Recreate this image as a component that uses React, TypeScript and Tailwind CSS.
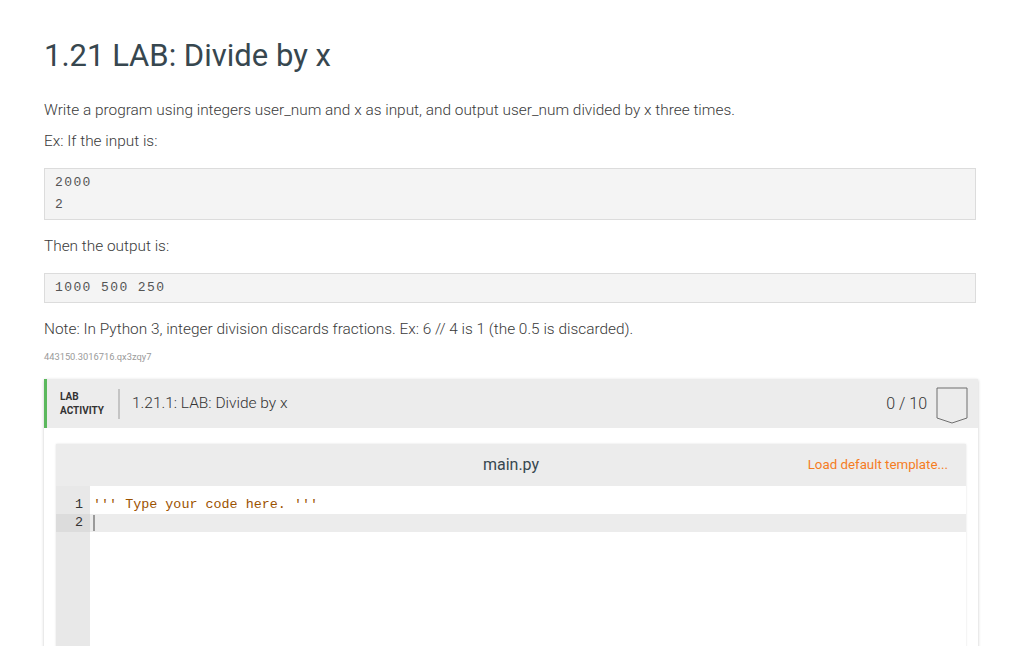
import React from "react";

export default function App() {
  const mono = { fontFamily: '"Liberation Mono", "DejaVu Sans Mono", monospace' };
  return (
    <div className="min-h-[646px] bg-white" style={{ fontFamily: 'Roboto, "Noto Sans", sans-serif' }}>
      <div className="ml-[44px] w-[932px] pt-9">
        <h1 className="text-[31px] leading-[40px] text-[#37474f] font-normal">1.21 LAB: Divide by x</h1>
        <p className="mt-[24px] text-[15.4px] leading-[20px] text-[#3a3a3a] font-light">
          Write a program using integers user_num and x as input, and output user_num divided by x three times.
        </p>
        <p className="mt-[11px] text-[15.4px] leading-[20px] text-[#3a3a3a] font-light">Ex: If the input is:</p>
        <div
          className="mt-[17px] border border-[#dcdcdc] bg-[#f4f4f4] px-[10px] py-[3px] text-[13px] leading-[22px] tracking-[1.4px] text-[#555]"
          style={mono}
        >
          <div>2000</div>
          <div>2</div>
        </div>
        <p className="mt-[16px] text-[15.4px] leading-[20px] text-[#3a3a3a] font-light">Then the output is:</p>
        <div
          className="mt-[17px] border border-[#dcdcdc] bg-[#f4f4f4] px-[10px] py-[3px] text-[13px] leading-[22px] tracking-[1.4px] text-[#555]"
          style={mono}
        >
          <div>1000 500 250</div>
        </div>
        <p className="mt-[16px] text-[15.4px] leading-[20px] text-[#3a3a3a] font-light">
          Note: In Python 3, integer division discards fractions. Ex: 6 // 4 is 1 (the 0.5 is discarded).
        </p>
        <p className="mt-[12px] text-[9.3px] leading-[12px] text-[#9a9a9a]">443150.3016716.qx3zqy7</p>

        <div className="mt-[16px] w-[934px] bg-white shadow-[0_1px_3px_rgba(0,0,0,0.22)]">
          <div className="flex h-[49px] items-center border-l-[3px] border-[#5bb85d] bg-[#ececec] pr-[10px]">
            <div className="ml-[13px] w-[58px] text-[10px] font-bold leading-[14px] text-[#333]">
              <div>LAB</div>
              <div>ACTIVITY</div>
            </div>
            <div className="h-[30px] w-[2px] bg-[#c4c4c4]" />
            <div className="ml-[12px] flex-1 text-[15.5px] font-light text-[#333]">1.21.1: LAB: Divide by x</div>
            <div className="mr-[9px] text-[16px] font-light text-[#333]">0 / 10</div>
            <svg width="32" height="38" viewBox="0 0 32 38" className="mt-[4px]">
              <path d="M1 1 H31 V31 L16 36 L1 31 Z" fill="none" stroke="#6f6f6f" strokeWidth="1" />
            </svg>
          </div>
          <div className="px-[12px] pt-[16px]">
            <div className="shadow-[0_0_2px_rgba(0,0,0,0.12)]">
              <div className="relative flex h-[42px] items-center justify-center bg-[#ececec]">
                <span className="text-[16px] text-[#37474f]">main.py</span>
                <span className="absolute right-[18px] text-[13.3px] text-[#f57c1f]">Load default template...</span>
              </div>
              <div className="flex h-[200px] bg-white" style={mono}>
                <div className="w-[34px] bg-[#e8e8e8] pt-[10px] text-right text-[13.4px] leading-[18px] text-[#333]">
                  <div className="pr-[7px]">1</div>
                  <div className="bg-[#dcdcdc] pr-[7px]">2</div>
                </div>
                <div className="flex-1 pt-[10px] text-[13.4px] leading-[18px]">
                  <div className="pl-[3px] text-[#9c5200] whitespace-pre">''' Type your code here. '''</div>
                  <div className="flex h-[18px] items-center bg-[#ececec] pl-[3px]">
                    <div className="h-[16px] w-[2px] bg-[#9a9a9a]" />
                  </div>
                </div>
              </div>
            </div>
          </div>
        </div>
      </div>
    </div>
  );
}
